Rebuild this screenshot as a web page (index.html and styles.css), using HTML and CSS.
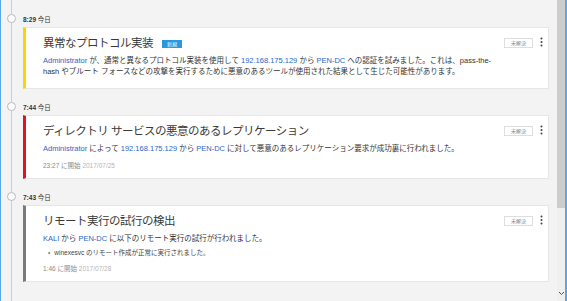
FILE: index.html
```html
<!DOCTYPE html>
<html lang="ja">
<head>
  <meta charset="UTF-8" />
  <title>アラート タイムライン</title>
  <link rel="stylesheet" href="styles.css">
</head>
<body>
  <div class="window">
    <main class="feed">
      <div class="rail"></div>

      <section class="entry">
        <div class="stamp"><span class="dot"></span><b>8:29</b> 今日</div>
        <article class="alert sev-medium">
          <div class="alert-body">
            <h2>異常なプロトコル実装<span class="tag-new">新規</span></h2>
            <p><a href="#">Administrator</a> が、通常と異なるプロトコル実装を使用して <a href="#">192.168.175.129</a> から <a href="#">PEN-DC</a> への認証を試みました。これは、pass-the-<br>hash やブルート フォースなどの攻撃を実行するために悪意のあるツールが使用された結果として生じた可能性があります。</p>
          </div>
          <div class="alert-actions">
            <span class="status">未解決</span>
            <svg class="more" width="3" height="10" viewBox="0 0 3 10"><circle cx="1.5" cy="1.5" r="1"/><circle cx="1.5" cy="5" r="1"/><circle cx="1.5" cy="8.5" r="1"/></svg>
          </div>
        </article>
      </section>

      <section class="entry">
        <div class="stamp"><span class="dot"></span><b>7:44</b> 今日</div>
        <article class="alert sev-high">
          <div class="alert-body">
            <h2>ディレクトリ サービスの悪意のあるレプリケーション</h2>
            <p><a href="#">Administrator</a> によって <a href="#">192.168.175.129</a> から <a href="#">PEN-DC</a> に対して悪意のあるレプリケーション要求が成功裏に行われました。</p>
            <div class="started">23:27 に開始 <span>2017/07/25</span></div>
          </div>
          <div class="alert-actions">
            <span class="status">未解決</span>
            <svg class="more" width="3" height="10" viewBox="0 0 3 10"><circle cx="1.5" cy="1.5" r="1"/><circle cx="1.5" cy="5" r="1"/><circle cx="1.5" cy="8.5" r="1"/></svg>
          </div>
        </article>
      </section>

      <section class="entry">
        <div class="stamp"><span class="dot"></span><b>7:43</b> 今日</div>
        <article class="alert sev-low">
          <div class="alert-body">
            <h2>リモート実行の試行の検出</h2>
            <p><a href="#">KALI</a> から <a href="#">PEN-DC</a> に以下のリモート実行の試行が行われました。</p>
            <ul class="details">
              <li>winexesvc のリモート作成が正常に実行されました。</li>
            </ul>
            <div class="started">1:46 に開始 <span>2017/07/28</span></div>
          </div>
          <div class="alert-actions">
            <span class="status">未解決</span>
            <svg class="more" width="3" height="10" viewBox="0 0 3 10"><circle cx="1.5" cy="1.5" r="1"/><circle cx="1.5" cy="5" r="1"/><circle cx="1.5" cy="8.5" r="1"/></svg>
          </div>
        </article>
      </section>
    </main>

    <div class="scrollbar">
      <div class="thumb"></div>
      <svg class="arrow" width="7" height="5" viewBox="0 0 7 5"><path d="M1 1 L3.5 3.5 L6 1" fill="none" stroke="#555" stroke-width="1"/></svg>
    </div>
  </div>
</body>
</html>
```

FILE: styles.css
```css
body {
  margin: 0;
  font-family: 'Liberation Sans', 'Noto Sans CJK JP', sans-serif;
  color: #333;
}

.window {
  display: flex;
  height: 301px;
  border-left: 1px solid #5aa6e6;
  border-right: 2px solid #5aa6e6;
  overflow: hidden;
}

.feed {
  position: relative;
  flex: 1;
  background-color: #f3f3f3;
  padding: 12px 8px 0 22px;
}

.rail {
  position: absolute;
  left: 10px;
  top: 0;
  bottom: 0;
  width: 1px;
  background-color: #cfcfcf;
}

.entry {
  margin-bottom: 11px;
}

.stamp {
  position: relative;
  height: 15px;
  line-height: 15px;
  font-size: 6.5px;
  color: #333;
}

.stamp b {
  font-weight: bold;
}

.dot {
  position: absolute;
  left: -16px;
  top: 2px;
  width: 7px;
  height: 7px;
  border: 1px solid #b9b9b9;
  border-radius: 50%;
  background: #fff;
}

.alert {
  display: flex;
  background: #fff;
  border: 1px solid #e6e6e6;
  border-left: 3px solid #999;
  padding: 8px 5px 8px 17px;
}

.sev-medium { border-left-color: #fcd400; }
.sev-high { border-left-color: #e81123; }
.sev-low { border-left-color: #7a7a7a; }

.alert-body {
  flex: 1;
  min-width: 0;
}

.alert h2 {
  margin: 0;
  font-size: 11.5px;
  letter-spacing: -0.5px;
  line-height: 14px;
  font-weight: normal;
  color: #3a3a3a;
}

.tag-new {
  display: inline-block;
  margin-left: 9px;
  padding: 0 5px;
  height: 8px;
  line-height: 8px;
  font-size: 5px;
  letter-spacing: 0;
  color: #fff;
  background-color: #2899df;
  vertical-align: 1px;
}

.alert p {
  margin: 5px 0 3px;
  font-size: 7.5px;
  line-height: 11px;
  color: #333;
}

.alert a {
  color: #2a66c9;
  text-decoration: none;
}

.details {
  list-style: none;
  margin: 0 0 3px;
  padding: 0;
  font-size: 6.5px;
  line-height: 11px;
  color: #444;
}

.details li {
  display: flex;
  gap: 4px;
}

.details li::before {
  content: "•";
  margin-left: 5px;
  color: #777;
}

.started {
  margin-top: 7.5px;
  font-size: 6.5px;
  line-height: 8px;
  color: #8a8a8a;
}

.started span {
  color: #b5b5b5;
}

.alert-actions {
  display: flex;
  align-items: flex-start;
  gap: 7px;
  margin-top: 2px;
}

.status {
  display: inline-block;
  width: 27px;
  height: 8px;
  line-height: 8px;
  border: 1px solid #dedede;
  font-size: 5px;
  text-align: center;
  color: #888;
}

.more {
  fill: #444;
  margin-top: -1px;
}

.scrollbar {
  width: 8px;
  display: flex;
  flex-direction: column;
  background-color: #efefef;
}

.thumb {
  height: 208px;
  background-color: #cdcdcd;
}

.arrow {
  margin: auto 0 5px 1px;
}
```
